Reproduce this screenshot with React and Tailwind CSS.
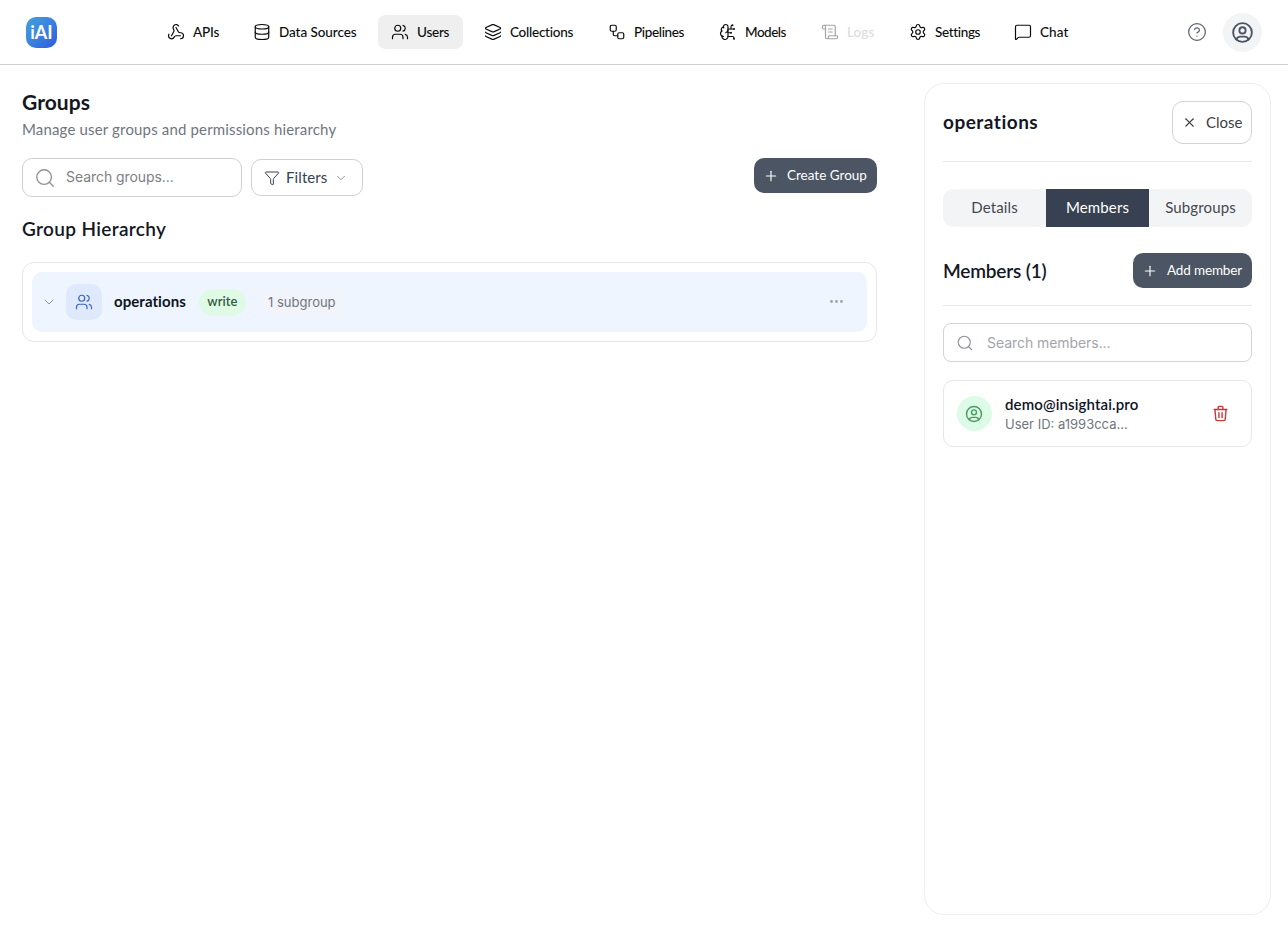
import React, { useState } from 'react';
import {
  Webhook, Database, Users, Layers, Workflow, BrainCircuit, ScrollText, Settings, MessageSquare,
  CircleHelp, Search, Funnel, ChevronDown, Plus, X, Ellipsis,
} from 'lucide-react';
import { TbUserCircle, TbTrash } from 'react-icons/tb';

const navItems = [
  { label: 'APIs', icon: Webhook, width: 'w-[78px]', tracking: 'tracking-[-0.15px]' },
  { label: 'Data Sources', icon: Database, width: 'w-[130px]', tracking: 'tracking-[-0.07px]' },
  { label: 'Users', icon: Users, width: 'w-[85px]', tracking: 'tracking-[-0.25px]', active: true },
  { label: 'Collections', icon: Layers, width: 'w-[116px]', tracking: 'tracking-[-0.25px]' },
  { label: 'Pipelines', icon: Workflow, width: 'w-[103px]', tracking: 'tracking-[-0.35px]' },
  { label: 'Models', icon: BrainCircuit, width: 'w-[94px]', tracking: 'tracking-[-0.5px]' },
  { label: 'Logs', icon: ScrollText, width: 'w-[80px]', tracking: 'tracking-[0.1px]', disabled: true },
  { label: 'Settings', icon: Settings, width: 'w-[97px]', tracking: 'tracking-[-0.35px]' },
  { label: 'Chat', icon: MessageSquare, width: 'w-[83px]', tracking: 'tracking-[0.1px]' },
];

const NavBar = () => (
  <header className="flex h-[65px] shrink-0 items-center border-b border-[#d0d1d3] px-[26px]">
    <div className="flex h-[31px] w-[31px] items-center justify-center rounded-[10px] bg-linear-to-br from-[#45a0d8] via-[#3b82e0] to-[#3157dc] text-[18px] font-bold text-white">
      iAI
    </div>
    <nav className="ml-[97px] flex gap-2">
      {navItems.map(({ label, icon: Icon, width, tracking, active, disabled }) => (
        <button
          key={label}
          disabled={disabled}
          className={`flex h-[34px] items-center gap-2 whitespace-nowrap rounded-lg pl-[13px] text-[13.5px] font-medium ${width} ${tracking} ${active ? 'bg-[#efefef]' : ''} ${disabled ? 'text-[#dcdcdc]' : 'text-[#0c0c0c]'}`}
        >
          <Icon size={18} strokeWidth={1.6} className={disabled ? 'shrink-0 text-[#a5a5a5]' : 'shrink-0'} />
          <span className="mt-px">{label}</span>
        </button>
      ))}
    </nav>
    <div className="ml-auto flex items-center gap-4">
      <CircleHelp size={20} strokeWidth={1.5} className="text-[#5b616b]" />
      <div className="flex h-[39px] w-[39px] items-center justify-center rounded-full bg-[#f3f4f6]">
        <TbUserCircle size={25} className="text-[#4b5563]" strokeWidth={1.8} />
      </div>
    </div>
  </header>
);

const GroupRow = ({ name, permission, subgroups }) => (
  <div className="flex h-[60px] items-center rounded-[10px] bg-[#eef5fe] pl-[9px] pr-[22px]">
    <ChevronDown size={16} strokeWidth={1.5} className="text-[#9097a3]" />
    <div className="ml-[9px] flex h-9 w-9 items-center justify-center rounded-[10px] bg-[#deeafc] pr-px text-[#3b62c4]">
      <Users size={18} strokeWidth={1.6} />
    </div>
    <span className="ml-3 pb-px text-[15px] font-bold tracking-[0.06px] text-[#10141f]">{name}</span>
    <span className="ml-[13px] flex h-[27px] w-[47px] items-center justify-center rounded-full bg-[#dffbe6] text-[13px] font-semibold text-[#2f5c40]">
      {permission}
    </span>
    <span className="ml-[14px] flex h-[27px] w-[84px] items-center justify-center rounded-full bg-[#f1f4fa] pt-0.5 font-[Inter,sans-serif] text-[13px] text-[#71757d]">
      {subgroups}
    </span>
    <Ellipsis size={17} className="mb-0.5 ml-auto text-[#9aa3b2]" />
  </div>
);

const GroupsPage = () => (
  <main className="w-[855px]">
    <h1 className="mt-[5px] h-7 text-[21px] font-bold leading-7 tracking-[0.05px]">Groups</h1>
    <p className="mt-[3px] h-[21px] whitespace-nowrap text-[15px] leading-[21px] tracking-[0.16px] text-[#71757e]">
      Manage user groups and permissions hierarchy
    </p>
    <div className="mt-[18px] flex items-center">
      <div className="flex h-[39px] w-[220px] items-center rounded-[10px] border border-[#cfd1d4] pl-[11px]">
        <Search size={22} strokeWidth={1.5} className="shrink-0 text-[#8f9298]" />
        <input
          placeholder="Search groups..."
          className="mb-0.5 ml-[10px] w-[160px] font-[Inter,sans-serif] text-[14px] tracking-[-0.06px] outline-none placeholder:text-[#7e8086]"
        />
      </div>
      <button className="ml-[9px] flex h-[37px] w-[112px] items-center rounded-[10px] border border-[#cfd1d4] pl-[12px] text-[15px] text-[#374151]">
        <Funnel size={16} strokeWidth={1.5} />
        <span className="ml-[6px] tracking-[0.1px]">Filters</span>
        <ChevronDown size={14} strokeWidth={1.5} className="ml-[7px] text-[#7e838c]" />
      </button>
      <button className="-mt-[4px] ml-auto flex h-[35px] w-[123px] items-center rounded-[10px] bg-[#4b5563] pl-[9px] text-[13.5px] text-white">
        <Plus size={16} strokeWidth={1.7} />
        <span className="ml-[8px] whitespace-nowrap">Create Group</span>
      </button>
    </div>
    <h2 className="mt-[18px] h-7 text-[19px] font-semibold leading-7 tracking-[0.35px]">Group Hierarchy</h2>
    <section className="mt-[19px] rounded-xl border border-[#e5e7eb] p-[9px]">
      <GroupRow name="operations" permission="write" subgroups="1 subgroup" />
    </section>
  </main>
);

const tabs = ['Details', 'Members', 'Subgroups'];

const GroupPanel = () => {
  const [tab, setTab] = useState('Members');

  return (
    <aside className="h-[832px] w-[347px] rounded-[20px] border border-[#eeeeef] px-[18px] pt-[17px]">
      <div className="flex h-[61px] items-start justify-between border-b border-[#e8e9eb]">
        <h2 className="mt-[7px] text-[19px] font-bold leading-7 tracking-[0.5px]">operations</h2>
        <button className="flex h-[43px] w-[80px] items-center rounded-[11px] border border-[#d1d3d6] pl-[9px] text-[15px] text-[#3f4145]">
          <X size={15} strokeWidth={1.7} />
          <span className="ml-[9px]">Close</span>
        </button>
      </div>
      <div className="mt-[27px] flex h-[38px] overflow-hidden rounded-[10px] bg-[#f3f4f6]">
        {tabs.map((t) => (
          <button
            key={t}
            onClick={() => setTab(t)}
            className={`flex-1 pb-0.5 text-[15px] tracking-[0.14px] ${t === tab ? 'bg-[#374151] text-white' : 'text-[#44484f]'}`}
          >
            {t}
          </button>
        ))}
      </div>
      <div className="mt-[26px] flex h-[53px] items-start justify-between border-b border-[#e8e9eb]">
        <h3 className="mt-[4px] text-[19px] font-semibold leading-7 tracking-[-0.18px]">Members (1)</h3>
        <button className="flex h-[35px] w-[119px] items-center rounded-[10px] bg-[#4b5563] pl-[9px] text-[13.5px] tracking-[-0.15px] text-white">
          <Plus size={16} strokeWidth={1.7} />
          <span className="ml-[9px] whitespace-nowrap">Add member</span>
        </button>
      </div>
      <div className="mt-[17px] flex h-[39px] items-center rounded-lg border border-[#d1d3d6] pl-[12px]">
        <Search size={18} strokeWidth={1.5} className="shrink-0 text-[#8f9298]" />
        <input
          placeholder="Search members..."
          className="ml-[13px] w-[240px] font-[Inter,sans-serif] text-[14px] tracking-[-0.06px] outline-none placeholder:text-[#a3a5aa]"
        />
      </div>
      <div className="mt-[18px] flex h-[67px] items-center rounded-[10px] border border-[#e5e7eb] pl-[13px] pr-[21px]">
        <div className="flex h-[35px] w-[35px] items-center justify-center rounded-full bg-[#dcfce7] pr-px">
          <TbUserCircle size={20} className="text-[#4a9a63]" strokeWidth={1.7} />
        </div>
        <div className="ml-[13px]">
          <p className="text-[15px] font-semibold leading-[20px] tracking-[0.12px] text-[#10141f]">demo@insightai.pro</p>
          <p className="pt-px font-[Inter,sans-serif] text-[13px] leading-[19px] text-[#71757e]">User ID: a1993cca...</p>
        </div>
        <TbTrash size={19} strokeWidth={1.8} className="ml-auto text-[#c93a3a]" />
      </div>
    </aside>
  );
};

const App = () => (
  <div className="flex h-[933px] w-[1288px] flex-col overflow-hidden bg-white font-[Lato,sans-serif] text-[#14171f]">
    <NavBar />
    <div className="flex pl-[22px] pt-[18px]">
      <GroupsPage />
      <div className="ml-[47px]">
        <GroupPanel />
      </div>
    </div>
  </div>
);

export default App;
